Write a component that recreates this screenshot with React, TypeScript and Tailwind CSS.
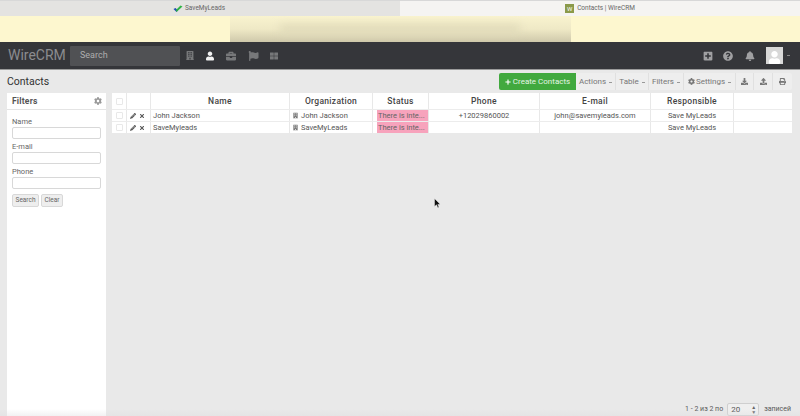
import React from "react";
import { FaBuilding, FaUser, FaBriefcase, FaFlag, FaThLarge, FaPlusSquare, FaQuestionCircle, FaBell, FaCog, FaPencilAlt, FaTimes, FaPlus, FaDownload, FaUpload, FaPrint } from "react-icons/fa";

const cols = "grid grid-cols-[14px_24px_139px_83px_56px_111px_111px_83px_59px]";
const cell = "border-l border-[#e8e8e8] first:border-l-0 flex items-center justify-center min-w-0";

function Caret() {
  return <span className="ml-[3px] mt-[1px] w-[3px] h-[1px] bg-[#999] inline-block shrink-0" />;
}

function Tool({ children, w }: { children: React.ReactNode; w: string }) {
  return <div className={`${w} shrink-0 h-full flex items-center justify-center bg-[#eeeeee] border-r border-[#e0e0e0] last:border-r-0 text-[#777] text-[8px] whitespace-nowrap`}>{children}</div>;
}

function Row({ name, org, phone, email }: { name: string; org: string; phone: string; email: string }) {
  return (
    <div className={`${cols} h-[11px] bg-white text-[7.5px] text-[#555]`}>
      <div className={cell}><span className="w-[7px] h-[7px] border border-[#e8e8e8] rounded-[1px]" /></div>
      <div className={`${cell} !justify-start pl-[3px] gap-[3px] text-[#555]`}><FaPencilAlt className="w-[6px] h-[6px]" /><FaTimes className="w-[6px] h-[6px]" /></div>
      <div className={`${cell} !justify-start pl-[2px]`}>{name}</div>
      <div className={`${cell} !justify-start pl-[3px] gap-[3px]`}><FaBuilding className="w-[5px] h-[7px] text-[#777]" />{org}</div>
      <div className={`${cell} !justify-start pl-[4px]`}><span className="bg-[#f7a3bc] w-[51px] h-full pl-[1px] flex items-center text-[#666] whitespace-nowrap">There is inte...</span></div>
      <div className={cell}>{phone}</div>
      <div className={cell}>{email}</div>
      <div className={cell}>Save MyLeads</div>
      <div className={cell} />
    </div>
  );
}

function Field({ label }: { label: string }) {
  return (
    <div className="flex flex-col">
      <span className="text-[7.5px] leading-[10px] text-[#666]">{label}</span>
      <span className="h-[12px] bg-white border border-[#d8d8d8] rounded-[2px]" />
    </div>
  );
}

export default function App() {
  return (
    <div className="relative w-[800px] h-[416px] overflow-hidden flex flex-col bg-[#e9e9e9] font-['Roboto',sans-serif]">
      <div className="h-[16px] flex text-[6.5px] text-[#666] border-t border-[#d8d8d8]">
        <div className="w-[400px] bg-[#e4e3e1] flex items-center justify-center gap-[2px] pr-[2px]">
          <svg width="10" height="8" viewBox="0 0 10 8"><path d="M0.5 4 L3.5 7 L5 5.5 L2.5 3 Z" fill="#1f4fb0" /><path d="M3.5 7 L9.5 1.5 L7.5 0.5 L3 5 Z" fill="#2fb344" /></svg>
          <span>SaveMyLeads</span>
        </div>
        <div className="w-[400px] bg-[#f5f4f2] flex items-center justify-center gap-[3px]">
          <span className="w-[9px] h-[9px] bg-[#8b9a4a] text-white text-[6px] flex items-center justify-center">W</span>
          <span>Contacts | WireCRM</span>
        </div>
      </div>
      <div className="h-[26px] bg-[#fdf7cf] flex justify-center overflow-hidden">
        <div className="w-[341px] h-full bg-gradient-to-b from-[#f9f3cf] via-[#efe9c6] to-[#cfc9ab] flex items-center justify-center">
          <div className="w-[240px] h-[8px] bg-[#dfd9b8] blur-[4px]" />
        </div>
      </div>
      <div className="h-[28px] bg-[#35363a] border-b border-[#9a9a9a] flex items-center pl-[8px] pr-[10px]">
        <span className="text-[14px] text-[#8b8c8f] w-[62px]">WireCRM</span>
        <div className="w-[110px] h-[20px] bg-[#505154] rounded-[1px] flex items-center pl-[10px] text-[9px] text-[#aeaeae]">Search</div>
        <FaBuilding className="ml-[6px] w-[8px] h-[13px] text-[#77787a]" />
        <FaUser className="ml-[12px] w-[8px] h-[10px] text-[#f2f2f2]" />
        <FaBriefcase className="ml-[11px] w-[12px] h-[10px] text-[#77787a]" />
        <FaFlag className="ml-[11px] w-[11px] h-[10px] text-[#77787a]" />
        <FaThLarge className="ml-[11px] w-[8px] h-[8px] text-[#77787a]" />
        <div className="flex-1" />
        <FaPlusSquare className="w-[10px] h-[10px] text-[#a0a0a2]" />
        <FaQuestionCircle className="ml-[10px] w-[10px] h-[10px] text-[#a0a0a2]" />
        <FaBell className="ml-[12px] w-[10px] h-[10px] text-[#a0a0a2]" />
        <div className="ml-[11px] w-[17px] h-[17px] bg-[#d8d8d8] flex items-end justify-center overflow-hidden">
          <FaUser className="w-[13px] h-[13px] text-white" />
        </div>
        <span className="ml-[4px] w-[3px] h-[1px] bg-[#888]" />
      </div>
      <div className="h-[22px] flex items-center pl-[7px] pr-[8px] pt-[1px]">
        <span className="text-[10.5px] text-[#333]">Contacts</span>
        <div className="flex-1" />
        <div className="h-[17px] flex overflow-hidden rounded-[2px]">
          <div className="w-[77px] shrink-0 bg-[#41a93e] text-[#e6f5e5] text-[8px] flex items-center justify-center gap-[2px] whitespace-nowrap">
            <FaPlus className="w-[6px] h-[6px] text-white" />Create Contacts
          </div>
          <Tool w="w-[40px]">Actions<Caret /></Tool>
          <Tool w="w-[33px]">Table<Caret /></Tool>
          <Tool w="w-[35px]">Filters<Caret /></Tool>
          <Tool w="w-[52px]"><FaCog className="w-[7px] h-[7px] mr-[1px]" />Settings<Caret /></Tool>
          <Tool w="w-[18px]"><FaDownload className="w-[7px] h-[7px]" /></Tool>
          <Tool w="w-[19px]"><FaUpload className="w-[7px] h-[7px]" /></Tool>
          <Tool w="w-[19px]"><FaPrint className="w-[7px] h-[7px]" /></Tool>
        </div>
      </div>
      <div className="flex-1 flex pl-[7px] pt-[1px] min-h-0">
        <div className="w-[99px] bg-white flex flex-col">
          <div className="h-[17px] border-b border-[#e4e4e4] flex items-center justify-between pl-[5px] pr-[4px] shrink-0">
            <span className="text-[8.5px] font-bold text-[#555] tracking-[0.2px]">Filters</span>
            <FaCog className="w-[8px] h-[8px] text-[#999]" />
          </div>
          <div className="px-[5px] pt-[7px] flex flex-col gap-[3px]">
            <Field label="Name" />
            <Field label="E-mail" />
            <Field label="Phone" />
            <div className="flex gap-[2px] mt-[2px]">
              <span className="w-[27px] h-[13px] bg-[#eeeeee] border border-[#d8d8d8] rounded-[2px] text-[6.5px] text-[#666] flex items-center justify-center">Search</span>
              <span className="w-[22px] h-[13px] bg-[#eeeeee] border border-[#d8d8d8] rounded-[2px] text-[6.5px] text-[#666] flex items-center justify-center">Clear</span>
            </div>
          </div>
        </div>
        <div className="flex-1 pl-[6px] pr-[8px] flex flex-col min-w-0">
          <div className="w-[680px] flex flex-col gap-[1px] bg-[#ececec]">
            <div className={`${cols} h-[16px] bg-white text-[8.5px] font-medium text-[#444] tracking-[0.3px]`}>
              <div className={cell}><span className="w-[7px] h-[7px] border border-[#e8e8e8] rounded-[1px]" /></div>
              <div className={cell} />
              <div className={cell}>Name</div>
              <div className={cell}>Organization</div>
              <div className={cell}>Status</div>
              <div className={cell}>Phone</div>
              <div className={cell}>E-mail</div>
              <div className={cell}>Responsible</div>
              <div className={cell} />
            </div>
            <Row name="John Jackson" org="John Jackson" phone="+12029860002" email="john@savemyleads.com" />
            <Row name="SaveMyleads" org="SaveMyLeads" phone="" email="" />
          </div>
          <div className="flex-1" />
          <div className="h-[13px] flex items-center justify-end gap-[4px] text-[7px] text-[#555] pr-[1px]">
            <span>1 - 2 из 2 по</span>
            <span className="w-[32px] h-[13px] border border-[#cfcfcf] bg-[#efefef] rounded-[2px] flex items-center justify-between px-[3px] text-[8px]">20<span className="text-[5px] leading-[5px] text-[#666] w-[4px] break-all">▲▼</span></span>
            <span className="ml-[1px]">записей</span>
          </div>
        </div>
      </div>
      <div className="absolute left-0 right-0 bottom-0 h-[7px] bg-gradient-to-b from-transparent to-[#dddddf]/40 pointer-events-none" />
      <svg className="absolute left-[434px] top-[198px]" width="7" height="11" viewBox="0 0 7 11"><path d="M0.5 0.5 V8.5 L2.5 6.8 L3.8 9.8 L5 9.2 L3.8 6.4 L6.2 6.2 Z" fill="#111" stroke="#fff" strokeWidth="0.4" /></svg>
    </div>
  );
}
